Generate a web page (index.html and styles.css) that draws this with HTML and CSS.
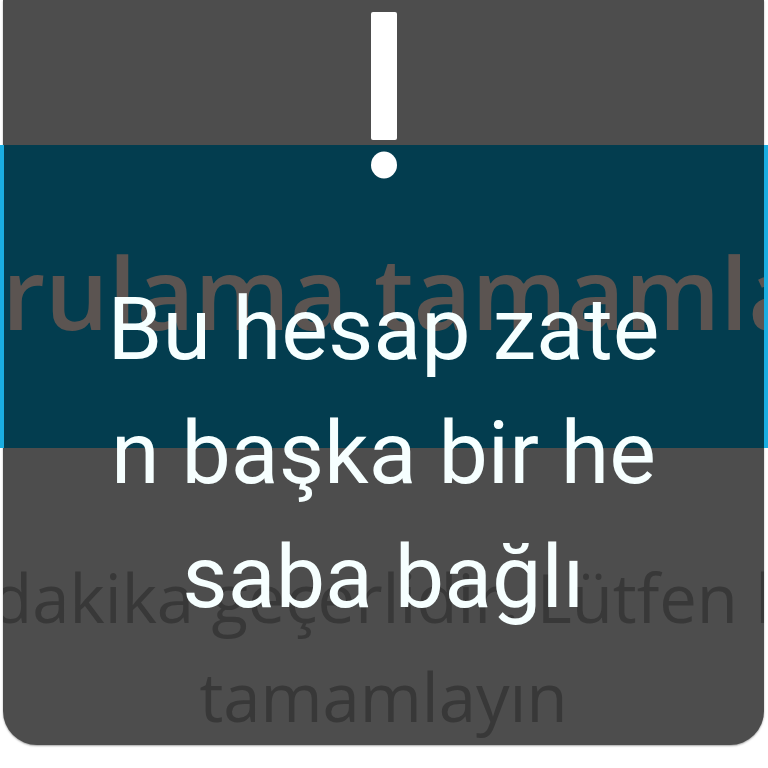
FILE: index.html
```html
<!DOCTYPE html>
<html lang="tr">
<head>
<meta charset="utf-8">
<title>Uyarı</title>
<link rel="stylesheet" href="styles.css">
</head>
<body>
<div class="card">
  <div class="band">
    <div class="band-line">Doğrulama tamamlandı</div>
  </div>
  <div class="info">
    <div class="info-line first">5 dakika geçerlidir. Lütfen bu</div>
    <div class="info-line">tamamlayın</div>
  </div>
  <div class="toast">
    <svg class="alert-icon" width="30" height="168" viewBox="0 0 30 168" aria-hidden="true">
      <rect x="2" y="0" width="26" height="128" rx="2" fill="#ffffff"/>
      <ellipse cx="15" cy="153" rx="13" ry="13.5" fill="#ffffff"/>
    </svg>
    <p class="toast-text">Bu hesap zaten başka bir hesaba bağlı</p>
  </div>
</div>
</body>
</html>
```
FILE: styles.css
```css
html, body {
  margin: 0;
  padding: 0;
  background: #ffffff;
}
body {
  width: 768px;
  height: 768px;
  overflow: hidden;
}
.card {
  position: relative;
  margin-left: 3px;
  width: 761px;
  height: 745px;
  background: #4d4d4d;
  border-radius: 0 0 34px 34px;
  box-shadow: 0 1px 2px rgba(0, 0, 0, 0.35);
  padding-top: 145px;
  box-sizing: border-box;
  font-family: "Open Sans", "Noto Sans", sans-serif;
}
.band {
  margin: 0 -4px 0 -3px;
  height: 303px;
  background: #033d4f;
  border-left: 4px solid #1aaee2;
  border-right: 4px solid #1aaee2;
  overflow: hidden;
  display: flex;
  flex-direction: column;
  align-items: center;
  padding-top: 96px;
  box-sizing: border-box;
}
.band-line {
  white-space: nowrap;
  font-size: 100px;
  line-height: 100px;
  font-weight: 600;
  color: #5b5451;
  margin-left: 4px;
}
.info {
  margin-top: 100px;
  display: flex;
  flex-direction: column;
  align-items: center;
  overflow: hidden;
  color: #383838;
}
.info-line {
  white-space: nowrap;
  font-size: 67px;
  line-height: 99px;
}
.info-line.first {
  margin-left: 6px;
}
.toast {
  position: absolute;
  left: 0;
  right: 0;
  top: 12px;
  display: flex;
  flex-direction: column;
  align-items: center;
}
.alert-icon {
  display: block;
  margin-left: 1px;
}
.toast-text {
  margin: 87px 0 0;
  width: 565px;
  text-align: center;
  word-break: break-all;
  font-family: Roboto, "Noto Sans", sans-serif;
  font-size: 88px;
  line-height: 124px;
  color: #f6ffff;
}
```
